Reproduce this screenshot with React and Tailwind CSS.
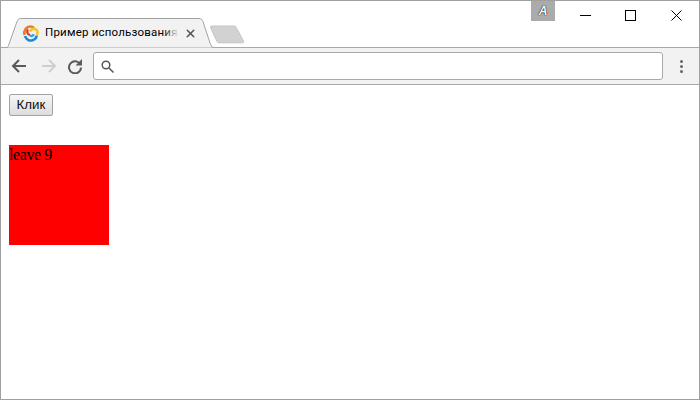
import { X } from 'lucide-react';

const Favicon = () => (
  <svg width="17" height="17" viewBox="0 0 17 17" fill="none" className="shrink-0">
    <path d="M2.500 10C1.400 5.500 4.500 1.500 8.500 1.500c1.500 0 2.700.5 3.500 1.500" stroke="#ee7d22" strokeWidth="2.600" />
    <path d="M8 6.500c1-2.400 3.800-3.500 5.800-2.200 1.800 1.200 2 3.500 1 5.500" stroke="#f7c51d" strokeWidth="2.600" />
    <path d="M6 4.500C4.400 6.500 5.500 9.500 8 10" stroke="#e8352c" strokeWidth="2.200" />
    <path d="M3 11c1 3.400 4.500 5.200 7.500 4.300 2.400-.7 4-2.600 4.200-4.800" stroke="#1f86d8" strokeWidth="2.600" />
    <path d="M8 10.500c1.500.8 3.200.3 4-1.200" stroke="#25a4e2" strokeWidth="2.200" />
  </svg>
);

const TabShape = () => (
  <svg width="206" height="30" viewBox="0 0 206 30" className="absolute left-0 top-0">
    <path d="M0 29.500C.5 29.500 1 29 1.500 27.500L10 3.500C10.800 1.500 12 .5 14 .5H192c2 0 3 1 4 3L203 25c1 2.500 2 4.500 3 4.500" fill="#f2f2f2" stroke="#a2a2a2" />
  </svg>
);

const NewTab = () => (
  <svg width="36" height="20" viewBox="0 0 36 20" className="shrink-0 mb-[3px] -ml-[4px]">
    <path d="M1.500 2.500C1.200 1.500 1.800 1 3 1H25c1 0 1.500.3 2 1.200L34.500 16c.5 1 0 1.800-1 1.800H10c-1 0-1.600-.4-2-1.300Z" fill="#d2d2d2" stroke="#c4c4c4" />
  </svg>
);

export default function App() {
  return (
    <div className="w-[700px] h-[400px] flex flex-col bg-white border border-[#a0a0a0] overflow-hidden">
      {/* tab strip */}
      <div className="h-[47px] shrink-0 flex justify-between border-b border-[#a8a8a8]">
        <div className="flex items-end pl-[6px] -mb-px">
          <div className="relative w-[206px] h-[30px] flex items-center pl-[15px]">
            <TabShape />
            <div className="relative flex items-center w-full">
              <Favicon />
              <div className="relative ml-[6px] w-[134px] overflow-hidden whitespace-nowrap text-[11.5px] tracking-[0.2px] text-black font-['Roboto',sans-serif]">
                Пример использования
                <div className="absolute right-0 top-0 bottom-0 w-[16px] bg-gradient-to-r from-transparent to-[#f2f2f2]" />
              </div>
              <X size={13} strokeWidth={2.8} className="ml-[5px] text-[#555555]" />
            </div>
          </div>
          <NewTab />
        </div>
        <div className="flex items-start">
          <div className="w-[24px] h-[20px] bg-[#ababab] flex items-center justify-center text-[12px] italic font-bold text-white [text-shadow:0_0_1px_#000000,0_0_1px_#000000] font-['Liberation_Sans',sans-serif] mr-[8px]">
            A
          </div>
          <div className="w-[45px] h-[29px] flex items-center justify-center">
            <svg width="11" height="11" viewBox="0 0 11 11"><path d="M0 5.500H11" stroke="#000" /></svg>
          </div>
          <div className="w-[45px] h-[29px] flex items-center justify-center">
            <svg width="11" height="11" viewBox="0 0 11 11"><rect x=".5" y=".5" width="10" height="10" fill="none" stroke="#000" /></svg>
          </div>
          <div className="w-[46px] h-[29px] flex items-center justify-center">
            <svg width="11" height="11" viewBox="0 0 11 11"><path d="M.5.500 10.500 10.500M10.500.500.500 10.500" stroke="#000" /></svg>
          </div>
        </div>
      </div>

      {/* toolbar */}
      <div className="h-[37px] shrink-0 bg-[#f2f2f2] border-b border-[#a8a8a8] flex items-center pl-[10px] pr-[16px]">
        <svg width="15" height="14" viewBox="0 0 15 14" fill="none" stroke="#5a5a5a" strokeWidth="2">
          <path d="M15 7H2M8 1 2 7l6 6" />
        </svg>
        <svg width="15" height="14" viewBox="0 0 15 14" fill="none" stroke="#cfcfcf" strokeWidth="2" className="ml-[16px]">
          <path d="M0 7h13M7 1l6 6-6 6" />
        </svg>
        <svg width="16" height="16" viewBox="0 0 16 16" fill="none" className="ml-[10px]">
          <path d="M13.300 6.500A6 6 0 1 0 14 9.500" stroke="#5a5a5a" strokeWidth="2" />
          <path d="M15 1v6.500H8.500Z" fill="#5a5a5a" />
        </svg>
        <div className="ml-[10px] w-[570px] h-[28px] bg-white border border-[#a9a9a9] rounded-[3px] flex items-center pl-[7px]">
          <svg width="13" height="13" viewBox="0 0 13 13" fill="none" stroke="#555555" strokeWidth="1.500">
            <circle cx="5" cy="5" r="3.800" />
            <path d="M8 8l4.500 4.500" />
          </svg>
        </div>
        <div className="ml-auto flex flex-col gap-[2px]">
          <span className="w-[3px] h-[3px] bg-[#666666] rounded-full" />
          <span className="w-[3px] h-[3px] bg-[#666666] rounded-full" />
          <span className="w-[3px] h-[3px] bg-[#666666] rounded-full" />
        </div>
      </div>

      {/* page */}
      <div className="pl-[8px] pt-[9px]">
        <button className="block w-[44px] h-[22px] bg-gradient-to-b from-[#f6f6f6] to-[#dddddd] border border-[#a3a3a3] rounded-[2px] text-[13.333px] text-[#111111] font-['Liberation_Sans',sans-serif]">
          Клик
        </button>
        <div className="mt-[29px] w-[100px] h-[100px] bg-[#ff0000] text-[16px] leading-[20px] tracking-[-0.4px] text-black font-['Liberation_Serif',serif]">
          leave 9
        </div>
      </div>
    </div>
  );
}
